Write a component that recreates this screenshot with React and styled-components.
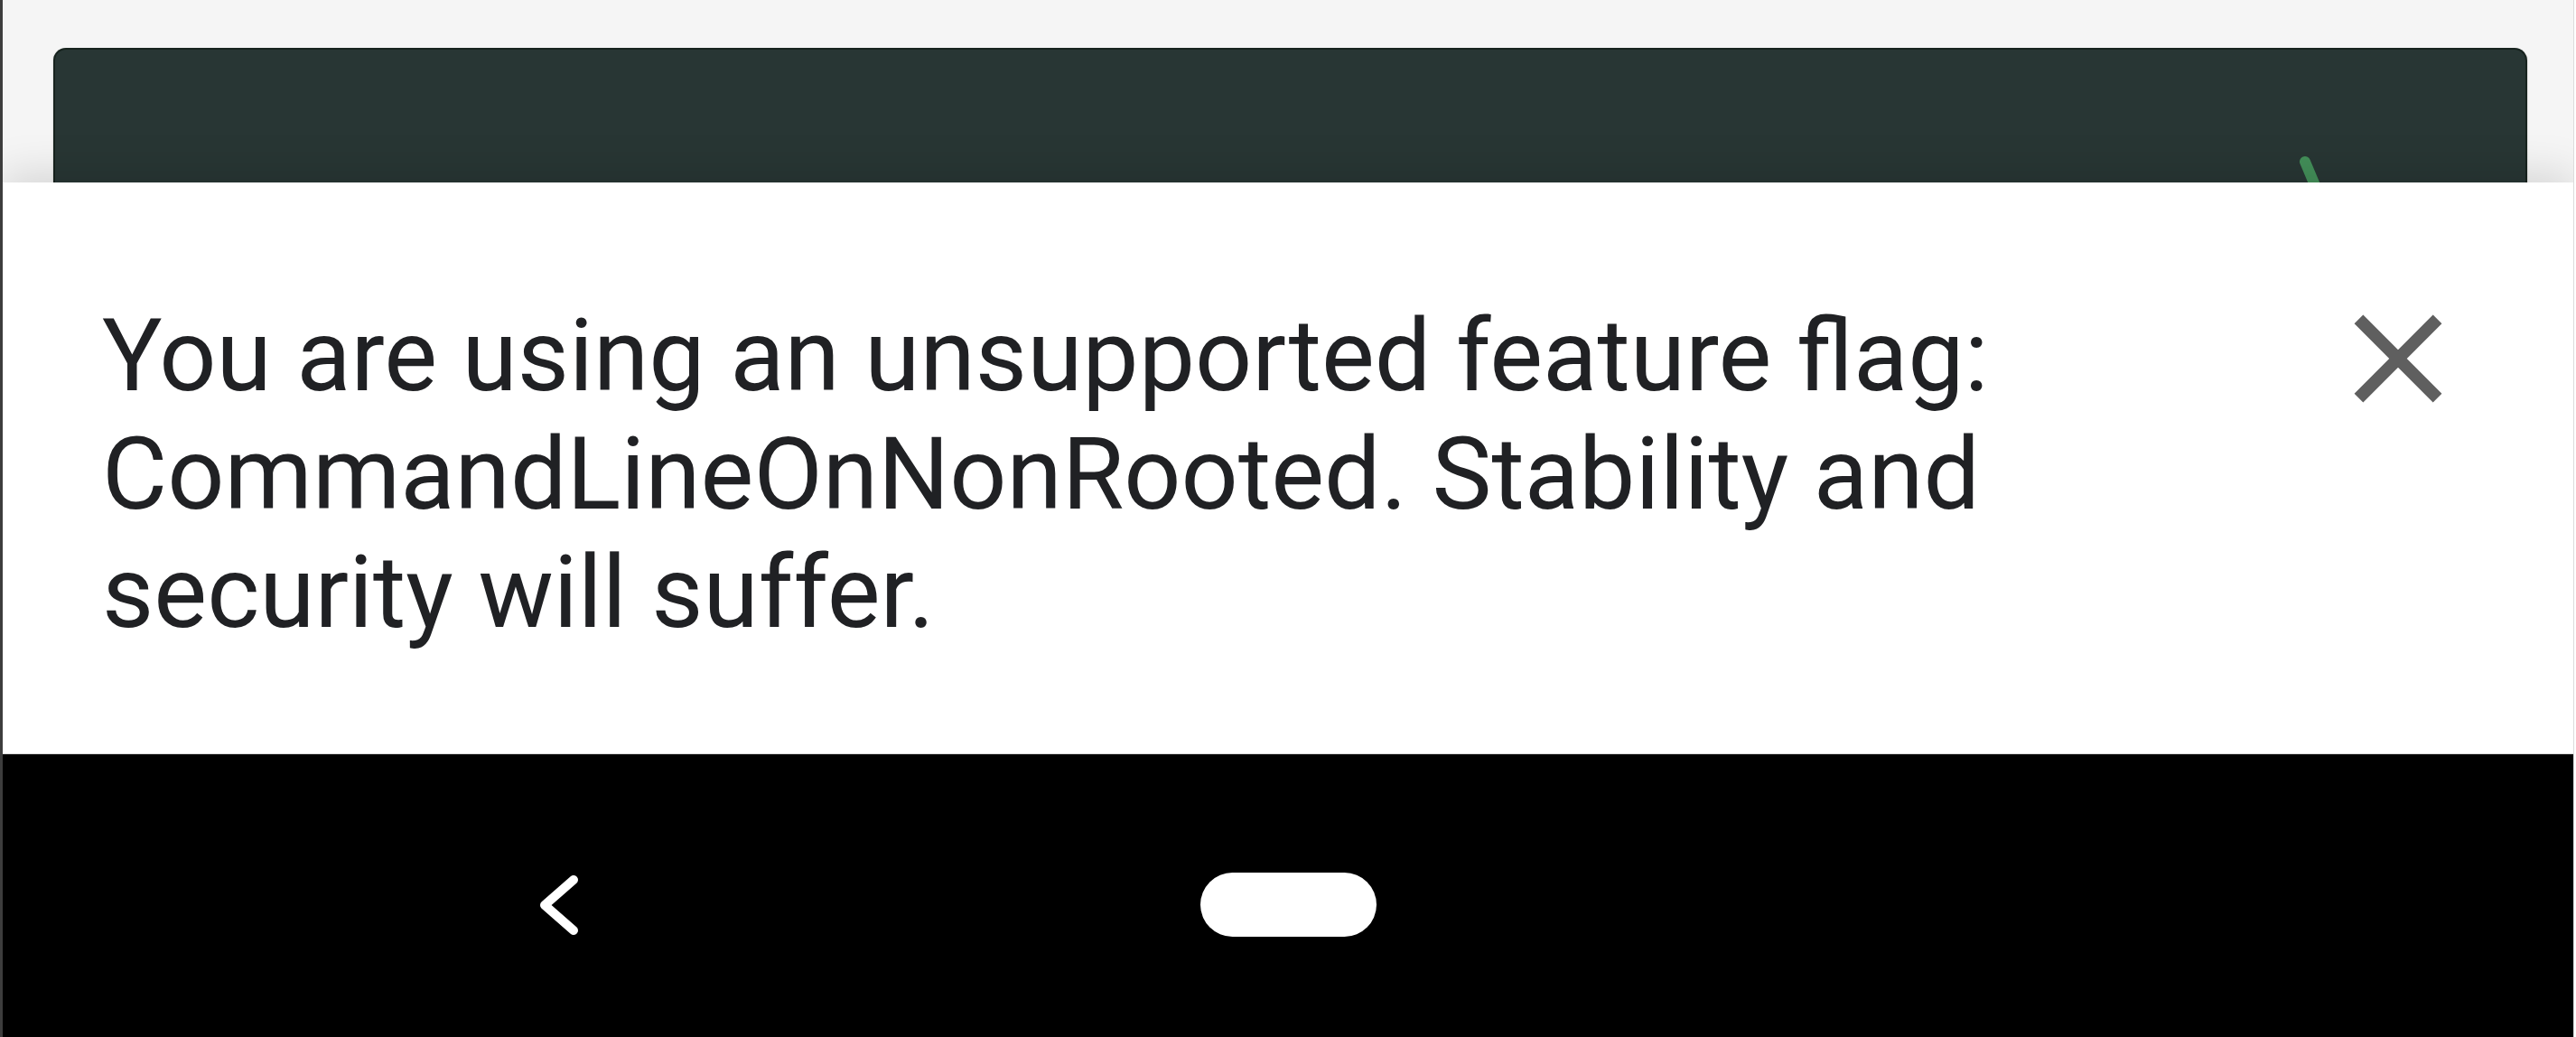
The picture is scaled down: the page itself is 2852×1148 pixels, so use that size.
import React from "react";
import styled, { createGlobalStyle } from "styled-components";

const GlobalStyle = createGlobalStyle`
  html, body {
    margin: 0;
    padding: 0;
    background: #ffffff;
  }
  #root {
    height: 100vh;
  }
`;

const Frame = styled.div`
  height: 100vh;
  margin-right: 2px;
  display: flex;
  flex-direction: column;
  border-left: 3px solid #3d3d3d;
  border-right: 1px solid #dcdcdc;
  font-family: Roboto, "Noto Sans", sans-serif;
  overflow: hidden;
`;

const Backdrop = styled.div`
  height: 202px;
  flex-shrink: 0;
  background: #f5f5f5;
  padding: 53px 51px 0 56px;
  box-sizing: border-box;
  overflow: hidden;
`;

const Card = styled.div`
  height: 260px;
  background: #283634;
  border: 2px solid #17231e;
  border-bottom: none;
  border-radius: 14px 14px 0 0;
  display: flex;
  justify-content: flex-end;
  align-items: flex-start;
  padding-right: 220px;
  box-shadow: 0 1px 2px rgba(0, 0, 0, 0.25);
`;

const PromptMark = styled.svg`
  margin-top: 114px;
  flex-shrink: 0;
`;

const Sheet = styled.div`
  flex: 1;
  position: relative;
  z-index: 1;
  background: #ffffff;
  display: flex;
  align-items: flex-start;
  gap: 60px;
  padding: 112px 111px 0 110px;
  box-shadow: 0 -10px 44px rgba(0, 0, 0, 0.13);
  border-bottom: 1px solid #d6d6d6;
`;

const Message = styled.p`
  flex: 1;
  margin: 15px 0 0;
  font-size: 111px;
  line-height: 131px;
  color: #202124;
  letter-spacing: 0;
`;

const CloseButton = styled.button`
  width: 166px;
  height: 166px;
  padding: 0;
  border: none;
  background: none;
  color: #5f5f5f;
  display: flex;
  align-items: center;
  justify-content: center;
  flex-shrink: 0;
  cursor: pointer;
`;

const NavBar = styled.div`
  height: 313px;
  flex-shrink: 0;
  background: #000000;
  display: grid;
  grid-template-columns: 1fr 195px 1fr;
  align-items: start;
  padding-top: 131px;
  box-sizing: border-box;
`;

const NavSlot = styled.div`
  display: flex;
  padding-left: ${(p) => p.$inset || 0}px;
`;

const BackKey = styled.svg`
  display: block;
`;

const HomePill = styled.div`
  width: 195px;
  height: 71px;
  border-radius: 36px;
  background: #ffffff;
`;

export default function App() {
  return (
    <>
      <GlobalStyle />
      <Frame>
        <Backdrop>
          <Card>
            <PromptMark width="34" height="50" viewBox="0 0 34 50">
              <line
                x1="10"
                y1="10"
                x2="26"
                y2="48"
                stroke="#438f59"
                strokeWidth="12"
                strokeLinecap="round"
              />
            </PromptMark>
          </Card>
        </Backdrop>
        <Sheet>
          <Message>
            You are using an unsupported feature flag: CommandLineOnNonRooted.
            Stability and security will suffer.
          </Message>
          <CloseButton aria-label="Close">
            <svg width="166" height="166" viewBox="0 0 24 24" fill="currentColor">
              <path d="M19 6.41L17.59 5 12 10.59 6.41 5 5 6.41 10.59 12 5 17.59 6.41 19 12 13.41 17.59 19 19 17.59 13.41 12z" />
            </svg>
          </CloseButton>
        </Sheet>
        <NavBar>
          <NavSlot $inset={594}>
            <BackKey width="44" height="72" viewBox="0 0 44 72">
              <polyline
                points="38,8 6,36 38,64"
                fill="none"
                stroke="#ffffff"
                strokeWidth="10"
                strokeLinecap="round"
                strokeLinejoin="round"
              />
            </BackKey>
          </NavSlot>
          <HomePill />
          <NavSlot />
        </NavBar>
      </Frame>
    </>
  );
}
